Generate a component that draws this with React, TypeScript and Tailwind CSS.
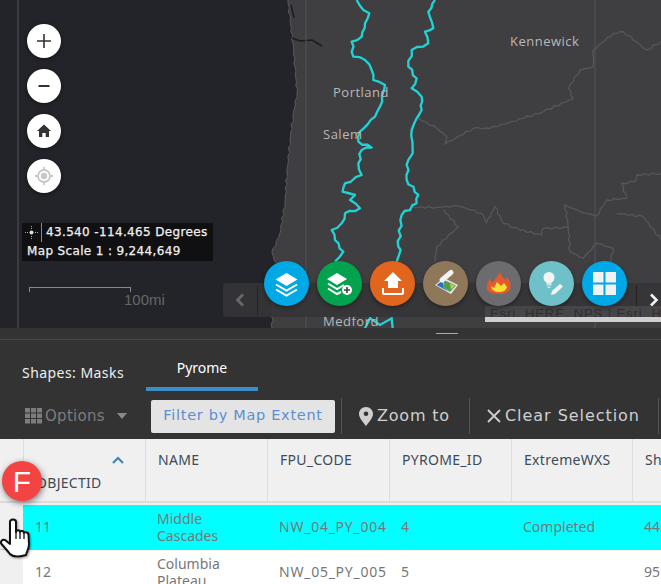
import React from 'react'

const leftLine = '80,0 100,30 118,40 105,70 95,110 65,125 70,170 105,180 125,210 130,240 165,255 150,320 135,350 90,395 85,425 125,443 95,450 85,490 95,525 45,550 38,575 75,585 60,600 90,625 45,640 35,670 5,690 15,720 40,755 15,785'
const rightLine = '315,0 295,35 310,85 285,95 295,130 245,150 235,200 260,235 245,265 275,290 275,330 260,355 245,390 248,460 235,480 230,540 265,585 260,610 215,645 205,740 212,750 200,785'

const borders = [
    '265,355 320,385 350,410 345,432 430,385 480,385 580,355 640,335 730,295 715,265 750,210 790,200 790,150 850,100 880,95 950,150 993,125',
    '250,622 320,622 385,618 455,640 470,668 495,620 520,670 570,690 635,705 640,685 715,683 705,615 750,635 800,648 830,600 890,595 875,550 915,545 920,525 993,520',
    '715,683 720,755 760,775 800,730 850,745 840,790',
    '340,630 385,680 320,740 315,785',
    '860,640 940,650 993,720',
]

const coast = '288,0 290,20 293,43 295,67 297,93 293,117 290,140 287,173 285,203 280,233 272,253 277,267 273,293 272,328'

// splits every segment and pushes the new points sideways, so the lines look hand traced
const roughen = (points: string, amount: number) => {
    const pts = points.split(' ').map((p) => p.split(',').map(Number))
    const out: string[] = []
    pts.forEach(([x, y], i) => {
        out.push(`${x},${y}`)
        const next = pts[i + 1]
        if (!next) return
        const len = Math.hypot(next[0] - x, next[1] - y) || 1
        const steps = Math.max(1, Math.round(len / (amount * 4)))
        for (let s = 1; s < steps; s++) {
            const t = s / steps
            const push = Math.sin(i * 12.9 + s * 78.2) * amount
            out.push(`${x + (next[0] - x) * t - ((next[1] - y) / len) * push},${y + (next[1] - y) * t + ((next[0] - x) / len) * push}`)
        }
    })
    return out.join(' ')
}

const MapBackground = () => (
    <svg className="absolute inset-0" width="661" height="328" viewBox="0 0 661 328">
        <rect width="661" height="328" fill="#232429" />
        <polygon points={`${roughen(coast, 1)} 661,328 661,0`} fill="#3f3e41" />
        <polyline points={roughen(coast, 1)} fill="none" stroke="#5a5a5e" strokeWidth="1" />
        <path d="M292 38 L300 41 L312 40 L322 46" fill="none" stroke="#1c1c20" strokeWidth="1.500" />
        <path d="M291 5 L294 18" fill="none" stroke="#1c1c20" strokeWidth="1.500" />
        <path d="M18 0 V328 M306 0 V328 M595 0 V328" stroke="#55555a" strokeWidth="1" />
        <g transform="translate(330 0) scale(0.3333)" fill="none">
            {borders.map((b) => (
                <polyline key={b} points={roughen(b, 3)} stroke="#565659" strokeWidth="4" />
            ))}
            <polyline points={roughen(leftLine, 4)} stroke="#1fd3d6" strokeWidth="7" strokeLinejoin="round" />
            <polyline points={roughen(rightLine, 4)} stroke="#1fd3d6" strokeWidth="7" strokeLinejoin="round" />
            <polyline points="105,985 120,955 150,975 185,955 188,985" stroke="#1fd3d6" strokeWidth="7" />
        </g>
    </svg>
)

const MapLabel = ({ text, className }: { text: string; className: string }) => (
    <span className={`absolute font-['Open_Sans',sans-serif] text-[13px] leading-none tracking-[0.5px] text-[#b9b9b9] ${className}`}>
        {text}
    </span>
)

const ZoomButton = ({ children }: { children: React.ReactNode }) => (
    <div className="w-[34px] h-[34px] rounded-full bg-white flex items-center justify-center shadow-[0_1px_4px_rgba(0,0,0,0.5)]">
        {children}
    </div>
)

const MapControls = () => (
    <div className="absolute left-[27px] top-[24px] flex flex-col gap-[11px]">
        <ZoomButton>
            <svg width="16" height="16" viewBox="0 0 16 16"><path d="M8 1v14M1 8h14" stroke="#333" strokeWidth="1.6" /></svg>
        </ZoomButton>
        <ZoomButton>
            <svg width="14" height="14" viewBox="0 0 14 14"><path d="M1.5 7h11" stroke="#333" strokeWidth="2" /></svg>
        </ZoomButton>
        <ZoomButton>
            <svg width="16" height="16" viewBox="0 0 16 16"><path d="M8 1.5 L15 8 H13 V14 H9.7 V10 H6.3 V14 H3 V8 H1 Z" fill="#333" /></svg>
        </ZoomButton>
        <ZoomButton>
            <svg width="20" height="20" viewBox="0 0 20 20" fill="none">
                <circle cx="10" cy="10" r="6" stroke="#c8c8c8" strokeWidth="1.8" />
                <circle cx="10" cy="10" r="3.2" fill="#c8c8c8" />
                <path d="M10 1v3M10 16v3M1 10h3M16 10h3" stroke="#c8c8c8" strokeWidth="1.8" />
            </svg>
        </ZoomButton>
    </div>
)

const Coordinates = () => (
    <div className="absolute left-[22px] top-[223px] w-[191px] h-[38px] bg-[#101012] font-['DejaVu_Sans',sans-serif] text-[12px] leading-[19px] tracking-[0.35px] text-[#f0f0f0] [-webkit-text-stroke:0.25px_#f0f0f0]">
        <div className="flex items-center h-[19px]">
            <svg className="ml-[3px]" width="13" height="13" viewBox="0 0 13 13">
                <path d="M6.5 0v3M6.5 10v3M0 6.5h3M10 6.5h3" stroke="#aaa" strokeWidth="1" strokeDasharray="1 1" />
                <circle cx="6.5" cy="6.5" r="2" fill="#ddd" />
            </svg>
            <div className="w-px h-[19px] bg-[#888] ml-[3px] mr-[4px]" />
            <span>43.540 -114.465 Degrees</span>
        </div>
        <div className="pl-[5px] h-[19px]">Map Scale 1 : 9,244,649</div>
    </div>
)

const ScaleBar = () => (
    <div className="absolute left-[29px] top-[287px]">
        <div className="w-[102px] h-[5px] border border-b-0 border-[#888]" />
        <span className="absolute left-[95px] top-[5px] font-['Liberation_Sans',sans-serif] text-[15px] leading-[16px] text-[#666]">100mi</span>
    </div>
)

const Circle = ({ color, children }: { color: string; children: React.ReactNode }) => (
    <div
        className="w-[45px] h-[45px] rounded-full shadow-[0_2px_4px_rgba(0,0,0,0.35)] shrink-0"
        style={{ backgroundColor: color }}
    >
        <svg width="45" height="45" viewBox="0 0 45 45">
            {children}
        </svg>
    </div>
)

const Carousel = () => (
    <>
        <div className="absolute left-[223px] top-[283px] w-[438px] h-[34px] rounded-l-[4px] bg-[#353537]/90 flex items-center justify-between">
            <div className="flex items-center">
                <svg className="ml-[12px]" width="10" height="14" viewBox="0 0 10 14" fill="none"><path d="M8 1.5 L2.5 7 L8 12.5" stroke="#6a6a6a" strokeWidth="2.6" /></svg>
                <div className="w-px h-[30px] bg-[#222] ml-[12px]" />
            </div>
            <div className="flex items-center">
                <div className="w-px h-[30px] bg-[#222] mr-[12px]" />
                <svg className="mr-[2px]" width="10" height="14" viewBox="0 0 10 14" fill="none"><path d="M2 1.5 L7.5 7 L2 12.5" stroke="#f2f2f2" strokeWidth="2.6" /></svg>
            </div>
        </div>
        <div className="absolute left-[485px] top-[306px] w-[176px] h-[16px] overflow-hidden bg-[#464648] font-['Liberation_Sans',sans-serif] text-[13px] leading-[16px] tracking-[0.9px] whitespace-nowrap text-[#2e2e2e] pl-[5px]">
            Esri, HERE, NPS | Esri, HERE, NPS
            <div className="absolute left-0 top-[11px] w-full h-[5px] bg-[#cfcfcf]" />
        </div>
        <div className="absolute left-[264px] top-[261px] flex gap-[8px]">
            <Circle color="#00a9e6">
                <path d="M22.5 12 L33.5 18.5 L22.5 25 L11.5 18.5 Z" fill="#fff" />
                <path d="M12 23.5 L22.5 29.5 L33 23.5 M12 28.5 L22.5 34.5 L33 28.5" stroke="#fff" strokeWidth="2" fill="none" />
            </Circle>
            <Circle color="#03a24e">
                <path d="M20 12 L30 18 L20 24 L10 18 Z" fill="#fff" />
                <path d="M11 22.5 L20 28 L27 24 M11 27.5 L20 33 L24 31" stroke="#fff" strokeWidth="2" fill="none" />
                <circle cx="30" cy="29" r="5" fill="#fff" />
                <path d="M30 26v6M27 29h6" stroke="#444" strokeWidth="1.6" />
            </Circle>
            <Circle color="#e2651d">
                <path d="M23 11 L32 20 H28 V27 H18 V20 H14 Z" fill="#fff" />
                <path d="M13 27 V32 Q13 33 14 33 H32 Q33 33 33 32 V27" stroke="#fff" strokeWidth="2" fill="none" />
            </Circle>
            <Circle color="#8f7759">
                <polygon points="12,24 21,17 35,24 28,33" fill="#e8e8e8" />
                <polygon points="21,19 33,24.500 27,31 20,26" fill="#4ea04e" />
                <polygon points="27,22.500 32,24.500 28,28.500" fill="#c6c84a" />
                <polygon points="13.500,24 20,19.500 20,26 25.500,30.500" fill="#2a6fc0" />
                <path d="M19 19 L28 11.500" stroke="#f2f2f2" strokeWidth="5" strokeLinecap="round" />
            </Circle>
            <Circle color="#6c6c6e">
                <path d="M24 11 Q26 17 30 19 L31 16 Q36 22 34 28 Q32 33 23 33 Q13 33 11 28 Q10 23 14 18 L16 22 Q20 18 24 11 Z" fill="#e5592c" />
                <path d="M15 25 L18 27 L21 21 L25 25 L28 22 L31 26 Q30 31 23 31 Q16 31 15 25 Z" fill="#f2e233" />
            </Circle>
            <Circle color="#6fc1c9">
                <circle cx="20" cy="16.500" r="5.500" fill="#f4f4f4" />
                <path d="M17.500 21 H22.500 V24.500 H17.500 Z M18.500 25.500 H21.500 V27 H18.500 Z" fill="#f4f4f4" opacity="0.7" />
                <path d="M22 34 L23 30 L31 23 L34 25.500 L26 33 Z" fill="#f4f4f4" />
            </Circle>
            <Circle color="#00a9e6">
                <path d="M11 11 H21.5 V21.5 H11 Z M23.5 11 H34 V21.5 H23.5 Z M11 23.5 H21.5 V34 H11 Z M23.5 23.5 H34 V34 H23.5 Z" fill="#f2f2f2" />
            </Circle>
        </div>
    </>
)

const Toolbar = () => (
    <div className="flex items-center h-[40px] pb-[6px] font-['DejaVu_Sans',sans-serif] text-[15px] tracking-[0.3px]">
        <svg className="ml-[25px]" width="17" height="16" viewBox="0 0 17 16" fill="#7d7d7d">
            <path d="M0 0h5v4.500H0zM6 0h5v4.500H6zM12 0h5v4.500h-5zM0 5.500h5V10H0zM6 5.500h5V10H6zM12 5.500h5V10h-5zM0 11h5v4.500H0zM6 11h5v4.500H6zM12 11h5v4.500h-5z" />
        </svg>
        <span className="ml-[3px] w-[72px] text-[#7d7d7d]">Options</span>
        <svg width="10" height="6" viewBox="0 0 10 6"><path d="M0 0h10L5 6z" fill="#8a8a8a" /></svg>
        <button className="ml-[24px] w-[184px] h-[33px] rounded-[2px] bg-[#e4e4e4] text-[#5b8fd0] text-[14.5px] tracking-[0.7px] whitespace-nowrap">
            Filter by Map Extent
        </button>
        <div className="w-px h-[36px] bg-[#555] ml-[6px]" />
        <svg className="ml-[17px]" width="14" height="19" viewBox="0 0 14 19">
            <path fillRule="evenodd" d="M7 0 C11 0 14 3 14 7 C14 11 9.500 15.500 7 19 C4.500 15.500 0 11 0 7 C0 3 3 0 7 0 Z M7 4.500 A2.300 2.300 0 1 0 7 9.100 A2.300 2.300 0 1 0 7 4.500 Z" fill="#cfcfcf" />
        </svg>
        <span className="ml-[4px] w-[92px] text-[#cfcfcf] text-[16px] tracking-[0.8px]">Zoom to</span>
        <div className="w-px h-[36px] bg-[#555]" />
        <svg className="ml-[17px]" width="14" height="14" viewBox="0 0 14 14"><path d="M1 1 L13 13 M13 1 L1 13" stroke="#cfcfcf" strokeWidth="1.8" /></svg>
        <span className="ml-[4px] w-[153px] text-[#cfcfcf] text-[16px] tracking-[0.95px] whitespace-nowrap">Clear Selection</span>
        <div className="w-px h-[36px] bg-[#555]" />
    </div>
)

const columns = ['OBJECTID', 'NAME', 'FPU_CODE', 'PYROME_ID', 'ExtremeWXS', 'Shape']

const rows = [
    { id: '11', name: ['Middle', 'Cascades'], code: 'NW_04_PY_004', pyrome: '4', wxs: 'Completed', shape: '44', selected: true },
    { id: '12', name: ['Columbia', 'Plateau'], code: 'NW_05_PY_005', pyrome: '5', wxs: '', shape: '95', selected: false },
]

const gridCols = 'grid grid-cols-[23px_122px_122px_122px_122px_121px_29px]'

const Table = () => (
    <div className="font-['Noto_Sans',sans-serif] text-[14px] leading-[17px] whitespace-nowrap">
        <div className={`${gridCols} h-[64px] bg-[#f0f0f0] border-b-2 border-[#dcdcdc] text-[#3c4a5a] tracking-[0.3px]`}>
            <div />
            {columns.map((col, i) => (
                <div key={col} className="relative border-l border-[#dddddd] pl-[12px] pt-[12px] overflow-hidden">
                    {i === 0 ? (
                        <>
                            <svg className="absolute left-[88px] top-[17px]" width="12" height="8" viewBox="0 0 12 8" fill="none">
                                <path d="M1 7 L6 2 L11 7" stroke="#3b82b8" strokeWidth="2" />
                            </svg>
                            <span className="block mt-[23px]">{col}</span>
                        </>
                    ) : (
                        col
                    )}
                </div>
            ))}
        </div>
        <div className="h-[2px] bg-[#f0f0f0]" />
        {rows.map((row) => (
            <div key={row.id} className={`${gridCols} h-[45px] text-[#777777] items-center`}>
                <div className="h-full bg-[#f0f0f0] border-b border-[#cccccc]" />
                {[row.id, row.name, row.code, row.pyrome, row.wxs, row.shape].map((cell, i) => (
                    <div
                        key={i}
                        className={`h-full flex flex-col justify-center pl-[12px] pb-[2px] overflow-hidden ${row.selected ? 'bg-[#00ffff]' : 'bg-white'} ${i === 2 ? 'tracking-[0.75px]' : ''}`}
                    >
                        {Array.isArray(cell) ? cell.map((line) => <span key={line}>{line}</span>) : cell}
                    </div>
                ))}
            </div>
        ))}
    </div>
)

const Badge = () => (
    <div className="absolute left-[2px] top-[461px] w-[40px] h-[40px] rounded-full bg-[#f44343] text-white flex items-center justify-center font-['Liberation_Sans',sans-serif] text-[30px] shadow-[1px_2px_6px_rgba(0,0,0,0.5)]">
        F
    </div>
)

const HandCursor = () => (
    <svg className="absolute left-0 top-[518px] drop-shadow-[1px_1px_1px_rgba(0,0,0,0.4)]" width="31" height="40" viewBox="0 0 31 40">
        <path
            d="M10 4 C10 0.500 16 0.500 16 4 L16 14 C16 12 20 11.500 20 14 C20 12.500 24 12.500 24 15 C24 13.500 28.500 14 28.500 17 L29 26 C29 31 27 33 26 37 C20 39 13 39 10 36 C7 32 4 29 1.500 26 C0 24 2 21 5 22 L10 26 Z"
            fill="#fff"
            stroke="#111"
            strokeWidth="2"
            strokeLinejoin="round"
        />
        <path d="M16 14v7M20 14v7M24 15v6" stroke="#111" strokeWidth="1.300" fill="none" />
    </svg>
)

export default function App() {
    return (
        <div className="relative w-[661px] h-[584px] overflow-hidden bg-[#333333]">
            <div className="relative h-[328px] overflow-hidden">
                <MapBackground />
                <MapLabel text="Kennewick" className="left-[510px] top-[35px]" />
                <MapLabel text="Portland" className="left-[333px] top-[86px]" />
                <MapLabel text="Salem" className="left-[323px] top-[128px]" />
                <MapLabel text="Medford" className="left-[323px] top-[315px]" />
                <MapControls />
                <Coordinates />
                <ScaleBar />
                <Carousel />
            </div>
            <div className="h-[12px] flex items-center border-b border-[#484848]">
                <div className="w-[22px] h-px bg-[#aaa] ml-[436px] -mt-px" />
            </div>
            <div className="flex h-[51px] font-['Noto_Sans',sans-serif] text-[14px] text-[#eeeeee]">
                <span className="ml-[22px] mt-[23px] w-[124px] leading-[20px] tracking-[0.45px]">Shapes: Masks</span>
                <div className="w-[112px] h-[51px] border-b-[4px] border-[#3b8dc8] text-center pt-[18px] leading-[20px] text-white">Pyrome</div>
            </div>
            <div className="h-[8px]" />
            <Toolbar />
            <Table />
            <Badge />
            <HandCursor />
        </div>
    )
}
